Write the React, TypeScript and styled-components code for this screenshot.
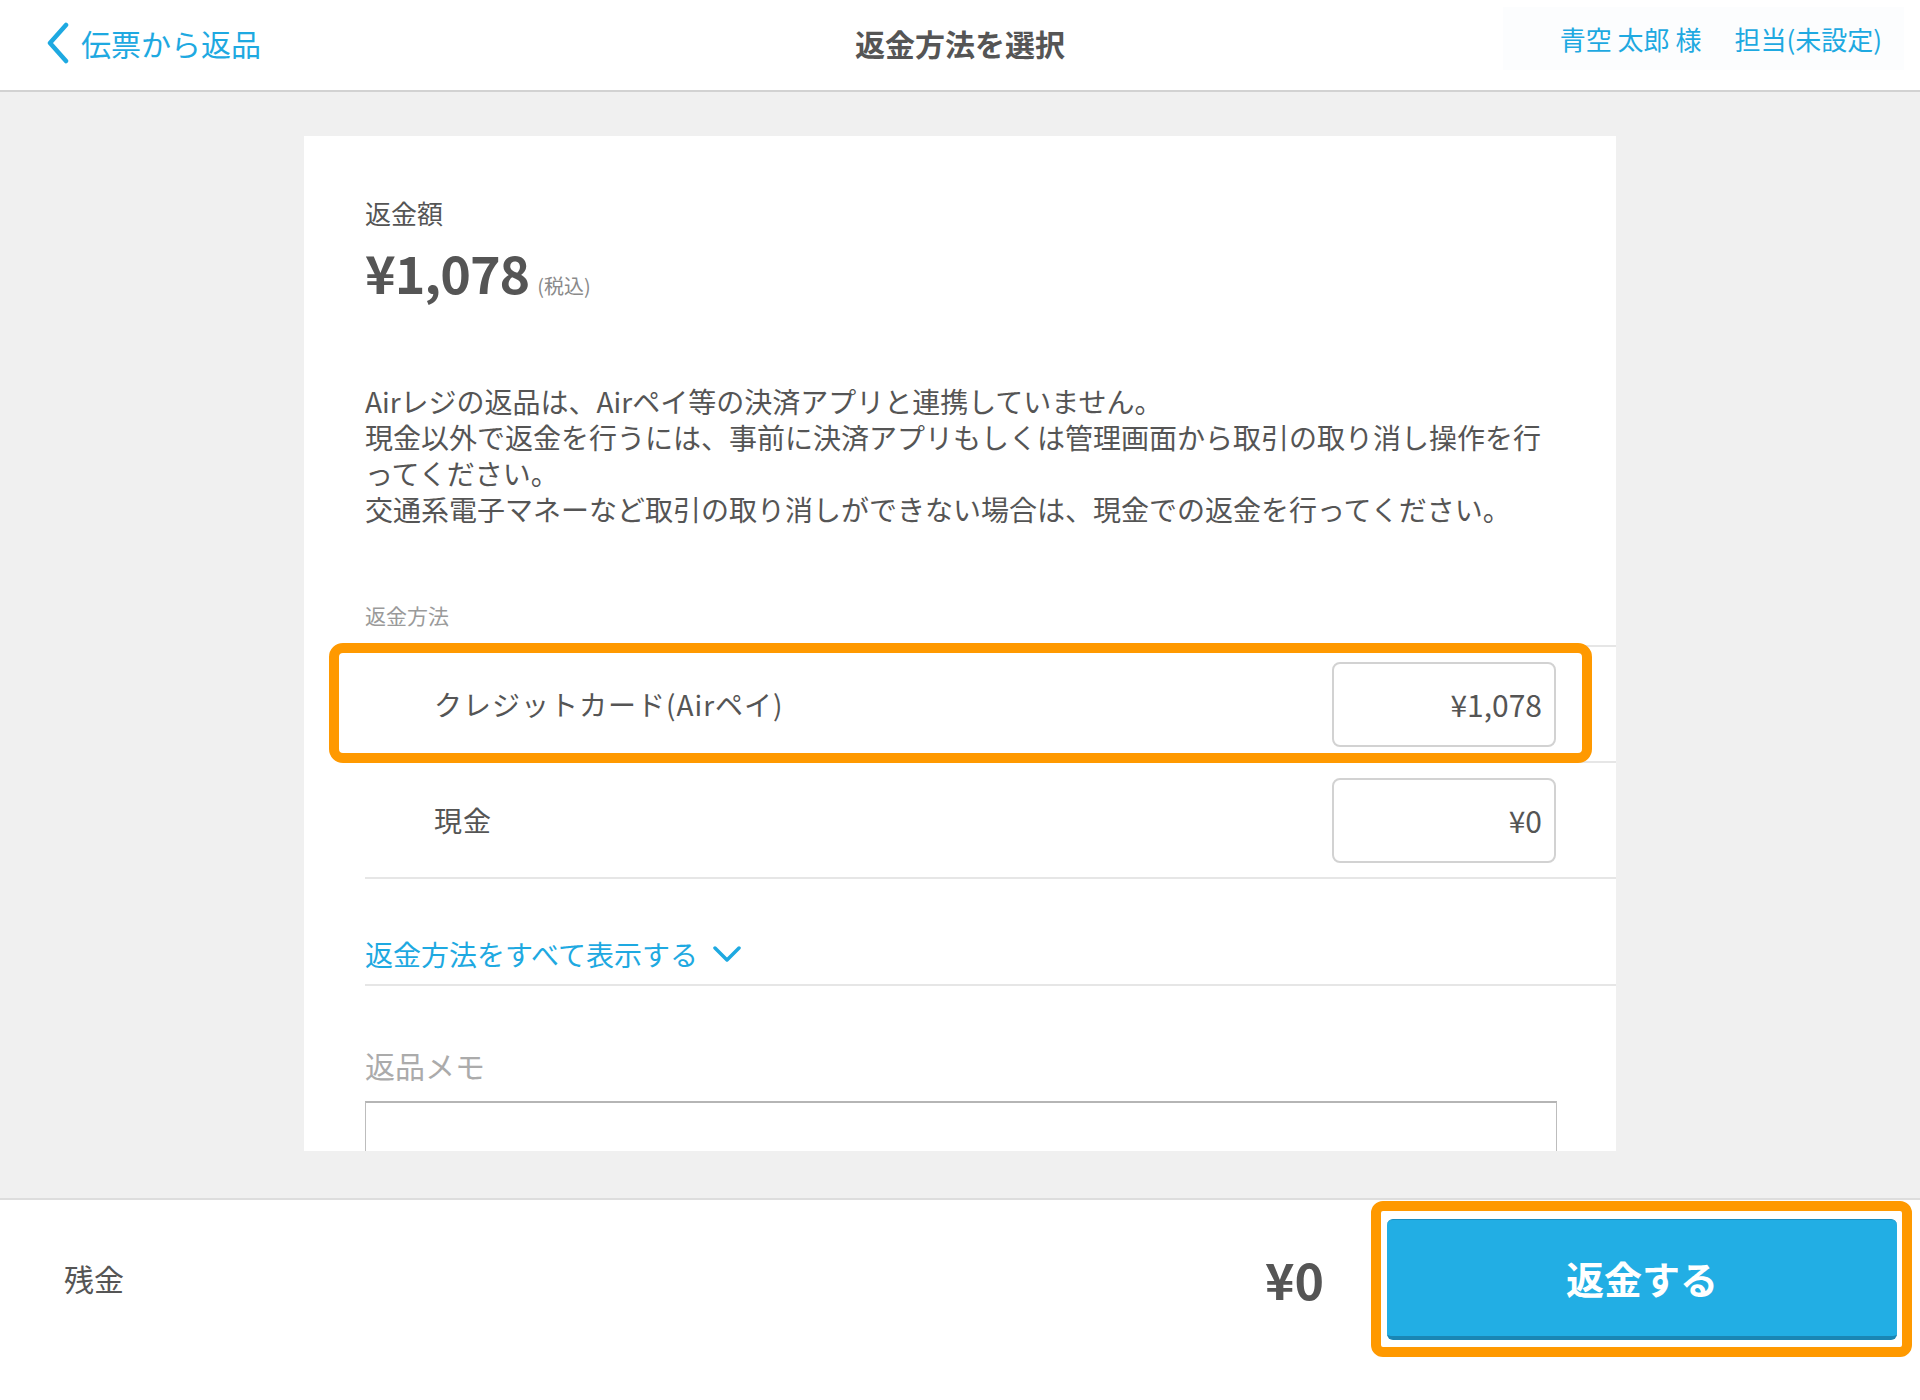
import styled, { createGlobalStyle } from "styled-components";

const GlobalStyle = createGlobalStyle`
  html, body {
    margin: 0;
    padding: 0;
    background: #ffffff;
  }
  body {
    font-family: "Noto Sans CJK JP", "Noto Sans", sans-serif;
    color: #555555;
  }
`;

const BLUE = "#1ea9e1";
const ORANGE = "#ff9900";

const Page = styled.div`
  width: 1920px;
  height: 1400px;
  display: flex;
  flex-direction: column;
  overflow: hidden;
`;

const Header = styled.header`
  height: 90px;
  box-sizing: content-box;
  border-bottom: 2px solid #d2d2d2;
  display: grid;
  grid-template-columns: 1fr auto 1fr;
  align-items: center;
  background: #ffffff;
`;

const BackLink = styled.a`
  display: flex;
  align-items: center;
  gap: 11px;
  padding: 0 0 5px 46px;
  color: ${BLUE};
  font-size: 30px;
  line-height: 40px;
  text-decoration: none;
  cursor: pointer;
`;

const Title = styled.h1`
  margin: 0 0 5px;
  font-size: 30px;
  font-weight: 700;
  line-height: 40px;
  color: #555555;
`;

const UserInfo = styled.div`
  justify-self: end;
  align-self: start;
  margin: 7px 16px 0 0;
  display: flex;
  align-items: center;
  gap: 33px;
  height: 63px;
  padding: 0 22px 0 57px;
  background: #fcfdfe;
  color: ${BLUE};
  font-size: 26px;
  line-height: 36px;
`;

const Main = styled.main`
  flex: 1;
  background: #f0f0f0;
  padding: 44px 0 47px;
  display: flex;
  justify-content: center;
  min-height: 0;
`;

const Card = styled.section`
  width: 1312px;
  background: #ffffff;
  padding: 59px 0 0 61px;
  box-sizing: border-box;
  overflow: hidden;
`;

const AmountLabel = styled.div`
  font-size: 26px;
  line-height: 36px;
  color: #555555;
`;

const AmountRow = styled.div`
  margin-top: 15px;
  display: flex;
  align-items: baseline;
  gap: 8px;
`;

const AmountValue = styled.span`
  font-size: 52px;
  line-height: 52px;
  font-weight: 700;
  letter-spacing: -1px;
  color: #555555;
`;

const TaxNote = styled.span`
  font-size: 20px;
  color: #8a8a8a;
`;

const Notice = styled.p`
  margin: 83px 61px 0 0;
  font-size: 28px;
  line-height: 36px;
  color: #555555;
`;

const SectionLabel = styled.div`
  margin-top: 73px;
  font-size: 21px;
  line-height: 30px;
  color: #9a9a9a;
`;

const MethodList = styled.div`
  margin-top: 15px;
  border-top: 2px solid #e6e6e6;
`;

const MethodRow = styled.div`
  position: relative;
  height: 114px;
  display: flex;
  align-items: center;
  justify-content: space-between;
  padding: 0 60px 0 69px;
  border-bottom: 2px solid #e6e6e6;
`;

const MethodName = styled.span`
  font-size: 28px;
  line-height: 36px;
  letter-spacing: 1px;
  color: #555555;
`;

const AmountField = styled.input`
  width: 224px;
  height: 85px;
  box-sizing: border-box;
  border: 2px solid #d2d2d2;
  border-radius: 8px;
  padding: 0 12px;
  text-align: right;
  font-family: inherit;
  font-size: 30px;
  color: #555555;
  background: #ffffff;
  outline: none;
`;

const Highlight = styled.div<{ $inset: string; $radius: number }>`
  position: absolute;
  inset: ${(p) => p.$inset};
  border: 10px solid ${ORANGE};
  border-radius: ${(p) => p.$radius}px;
  pointer-events: none;
`;

const ShowAllRow = styled.div`
  height: 107px;
  box-sizing: border-box;
  display: flex;
  align-items: flex-end;
  padding-bottom: 12px;
  border-bottom: 2px solid #e6e6e6;
`;

const ShowAllLink = styled.a`
  display: flex;
  align-items: center;
  gap: 15px;
  color: ${BLUE};
  font-size: 28px;
  line-height: 36px;
  cursor: pointer;
`;

const MemoLabel = styled.div`
  margin-top: 59px;
  font-size: 30px;
  line-height: 40px;
  color: #ababab;
`;

const MemoBox = styled.textarea`
  display: block;
  margin-top: 16px;
  width: 1192px;
  height: 200px;
  box-sizing: border-box;
  border: 1px solid #bdbdbd;
  border-top: 2px solid #b5b5b5;
  resize: none;
  font-family: inherit;
  font-size: 26px;
  outline: none;
`;

const Footer = styled.footer`
  height: 202px;
  box-sizing: border-box;
  border-top: 2px solid #dddddd;
  padding: 0 23px 44px 64px;
  display: flex;
  align-items: center;
  background: #ffffff;
`;

const RemainLabel = styled.span`
  font-size: 30px;
  line-height: 40px;
  color: #555555;
`;

const RemainValue = styled.span`
  margin-left: auto;
  margin-right: 63px;
  font-size: 50px;
  line-height: 52px;
  font-weight: 700;
  color: #555555;
`;

const ButtonWrap = styled.div`
  position: relative;
  margin-top: 2px;
`;

const RefundButton = styled.button`
  display: block;
  width: 510px;
  height: 121px;
  box-sizing: border-box;
  border: none;
  border-top: 1px solid #1a8fc2;
  border-bottom: 4px solid #1a86b4;
  border-radius: 6px;
  background: #22aee4;
  color: #ffffff;
  font-family: inherit;
  font-size: 38px;
  font-weight: 700;
  cursor: pointer;
`;

const BackChevron = () => (
  <svg width="24" height="42" viewBox="0 0 24 42" fill="none">
    <polyline
      points="20,3 4,21 20,39"
      stroke={BLUE}
      strokeWidth="4.5"
      strokeLinecap="round"
      strokeLinejoin="round"
    />
  </svg>
);

const DownChevron = () => (
  <svg width="28" height="16" viewBox="0 0 28 16" fill="none">
    <polyline
      points="2,2 14,14 26,2"
      stroke={BLUE}
      strokeWidth="3.5"
      strokeLinecap="round"
      strokeLinejoin="round"
    />
  </svg>
);

const methods = [
  { name: "クレジットカード(Airペイ)", amount: "¥1,078", highlighted: true },
  { name: "現金", amount: "¥0", highlighted: false },
];

export default function App() {
  return (
    <Page>
      <GlobalStyle />
      <Header>
        <BackLink>
          <BackChevron />
          伝票から返品
        </BackLink>
        <Title>返金方法を選択</Title>
        <UserInfo>
          <span>青空 太郎 様</span>
          <span>担当(未設定)</span>
        </UserInfo>
      </Header>

      <Main>
        <Card>
          <AmountLabel>返金額</AmountLabel>
          <AmountRow>
            <AmountValue>¥1,078</AmountValue>
            <TaxNote>(税込)</TaxNote>
          </AmountRow>

          <Notice>
            Airレジの返品は、Airペイ等の決済アプリと連携していません。
            <br />
            現金以外で返金を行うには、事前に決済アプリもしくは管理画面から取引の取り消し操作を行ってください。
            <br />
            交通系電子マネーなど取引の取り消しができない場合は、現金での返金を行ってください。
          </Notice>

          <SectionLabel>返金方法</SectionLabel>
          <MethodList>
            {methods.map((m) => (
              <MethodRow key={m.name}>
                <MethodName>{m.name}</MethodName>
                <AmountField readOnly value={m.amount} />
                {m.highlighted && <Highlight $inset="-4px 24px -2px -36px" $radius={14} />}
              </MethodRow>
            ))}
            <ShowAllRow>
              <ShowAllLink>
                返金方法をすべて表示する
                <DownChevron />
              </ShowAllLink>
            </ShowAllRow>
          </MethodList>

          <MemoLabel>返品メモ</MemoLabel>
          <MemoBox />
        </Card>
      </Main>

      <Footer>
        <RemainLabel>残金</RemainLabel>
        <RemainValue>¥0</RemainValue>
        <ButtonWrap>
          <RefundButton>返金する</RefundButton>
          <Highlight $inset="-18px -15px -17px -16px" $radius={12} />
        </ButtonWrap>
      </Footer>
    </Page>
  );
}
